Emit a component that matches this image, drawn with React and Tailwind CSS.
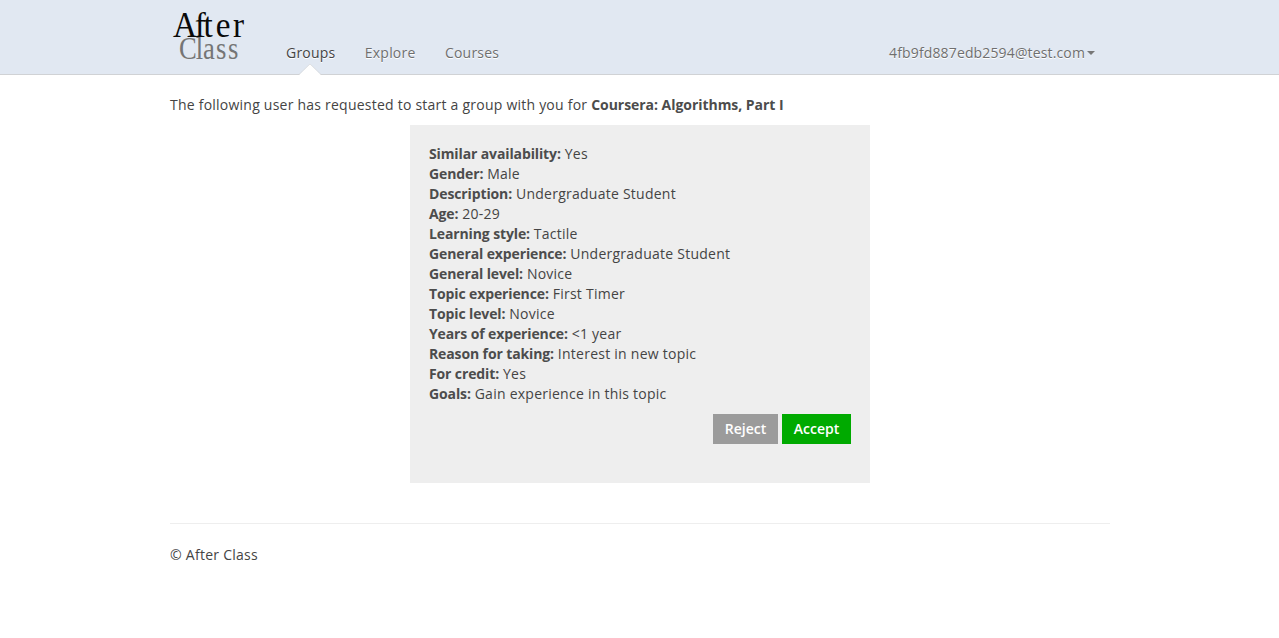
const details = [
  ['Similar availability', 'Yes'],
  ['Gender', 'Male'],
  ['Description', 'Undergraduate Student'],
  ['Age', '20-29'],
  ['Learning style', 'Tactile'],
  ['General experience', 'Undergraduate Student'],
  ['General level', 'Novice'],
  ['Topic experience', 'First Timer'],
  ['Topic level', 'Novice'],
  ['Years of experience', '<1 year'],
  ['Reason for taking', 'Interest in new topic'],
  ['For credit', 'Yes'],
  ['Goals', 'Gain experience in this topic'],
];

function Logo() {
  return (
    <svg className="h-[74px] w-[80px] shrink-0 [text-shadow:none]" viewBox="0 0 80 74" aria-label="After Class">
      <g fontFamily="'Liberation Serif', serif">
        <text transform="translate(3 37) scale(.95 1)" x="0 23 32 45 63.2" fontSize="35" fill="#0a0a0a">After</text>
        <text transform="translate(9 59) scale(.86 1)" x="0 19.5 28 43 57" fontSize="31" fill="#757575">Class</text>
      </g>
    </svg>
  );
}

function Navbar() {
  return (
    <header className="h-[75px] border-b border-[#d0d2d5] bg-[#e1e8f2]">
      <div className="ml-[170px] flex h-[74px] w-[940px] text-[#6f6f6f] [text-shadow:0_1px_0_#fff]">
        <Logo />
        <nav className="ml-[36px] flex gap-[29.5px] pt-[43px] tracking-[0.2px]">
          <a className="relative text-[#444]">
            Groups
            <svg className="absolute top-[21px] left-[13px] h-[11px] w-[22px]" viewBox="0 0 22 11">
              <path d="M0 11 11 0 22 11Z" fill="#fff" />
              <path d="M0 10.5 11 0 22 10.5" fill="none" stroke="#ccc" strokeWidth=".5" />
            </svg>
          </a>
          <a>Explore</a>
          <a>Courses</a>
        </nav>
        <div className="mr-[15px] ml-auto flex pt-[43px] tracking-[0.14px]">
          4fb9fd887edb2594@test.com
          <span className="mt-[8px] ml-[2px] h-0 w-0 border-x-4 border-t-4 border-x-transparent border-t-[#777]" />
        </div>
      </div>
    </header>
  );
}

export default function App() {
  return (
    <div className="min-h-screen bg-white font-['Open_Sans',sans-serif] text-[14px] leading-[20px] text-[#444]">
      <Navbar />
      <main className="ml-[170px] w-[940px] pt-[20px] tracking-[0.23px]">
        <p>
          The following user has requested to start a group with you for{' '}
          <b className="tracking-[-0.04px] text-[#4c4c4c]">Coursera: Algorithms, Part I</b>
        </p>
        <section className="mx-auto mt-[10px] h-[358px] w-[460px] bg-[#eee] px-[19px] pt-[19px]">
          {details.map(([label, value]) => (
            <p key={label} className="tracking-[0.25px]">
              <b className="tracking-[-0.12px] text-[#4c4c4c]">{label}:</b> {value}
            </p>
          ))}
          <div className="mt-[10px] flex justify-end gap-1 font-semibold tracking-normal text-white">
            <button className="h-[30px] w-[65px] bg-[#9b9b9b]">Reject</button>
            <button className="h-[30px] w-[69px] bg-[#0a0]">Accept</button>
          </div>
        </section>
        <footer className="mt-[40px] border-t border-[#eee] pt-[21px] tracking-[0.26px]">© After Class</footer>
      </main>
    </div>
  );
}
